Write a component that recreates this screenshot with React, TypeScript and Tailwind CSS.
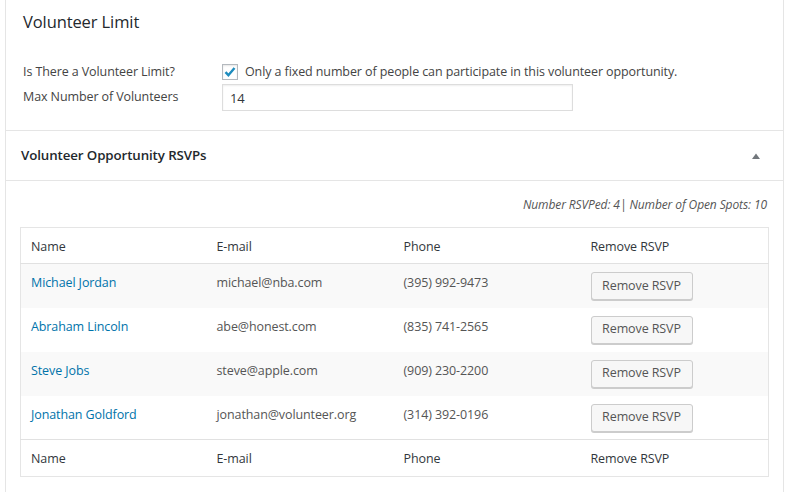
import { useState } from 'react';

const rsvps = [
  { id: 1, name: 'Michael Jordan', email: 'michael@nba.com', phone: '(395) 992-9473' },
  { id: 2, name: 'Abraham Lincoln', email: 'abe@honest.com', phone: '(835) 741-2565' },
  { id: 3, name: 'Steve Jobs', email: 'steve@apple.com', phone: '(909) 230-2200' },
  { id: 4, name: 'Jonathan Goldford', email: 'jonathan@volunteer.org', phone: '(314) 392-0196' },
];

export default function App() {
  const [limited, setLimited] = useState(true);
  const [maxCount, setMaxCount] = useState('14');

  return (
    <div className="min-h-screen bg-white font-['Open_Sans',sans-serif] text-[12.5px] tracking-[-0.1px] text-[#444]">
      <div className="ml-[5px] w-[779px] min-h-[492px] border-x border-[#e5e5e5]">
        <div className="px-[17px] pt-[10px] pb-[19px] border-b border-[#e5e5e5]">
          <h2 className="text-[16.5px] leading-[24px] text-[#23282d] mb-[25px]">Volunteer Limit</h2>
          <div className="flex items-center h-[26px]">
            <div className="w-[199px] text-[#444]">Is There a Volunteer Limit?</div>
            <label className="flex items-center gap-[7px]">
              <button
                type="button"
                onClick={() => setLimited(!limited)}
                className="w-[16px] h-[16px] border border-[#b4b9be] bg-white flex items-center justify-center shadow-[inset_0_1px_2px_rgba(0,0,0,0.1)]"
              >
                {limited && (
                  <svg width="14" height="14" viewBox="0 0 14 14">
                    <path d="M2.5 7.2 L5.4 10.2 L11.5 3" fill="none" stroke="#1e8cbe" strokeWidth="2.4" />
                  </svg>
                )}
              </button>
              <span>Only a fixed number of people can participate in this volunteer opportunity.</span>
            </label>
          </div>
          <div className="flex items-center -mt-[1px]">
            <div className="w-[199px]">Max Number of Volunteers</div>
            <input
              value={maxCount}
              onChange={(event) => setMaxCount(event.target.value)}
              className="w-[351px] h-[27px] border border-[#ddd] px-[7px] text-[13px] text-[#32373c] shadow-[inset_0_1px_2px_rgba(0,0,0,0.07)] outline-none"
            />
          </div>
        </div>

        <div className="h-[50px] px-[15px] flex items-center justify-between border-b border-[#e5e5e5]">
          <h3 className="text-[13.3px] tracking-[-0.1px] font-semibold text-[#23282d]">Volunteer Opportunity RSVPs</h3>
          <svg width="10" height="8" viewBox="0 0 10 8" className="mr-[7px]">
            <path d="M1 7 L5 1.5 L9 7 Z" fill="#72777c" />
          </svg>
        </div>

        <div className="px-[14px] pt-[15px]">
          <p className="text-right text-[12px] italic text-[#555] mb-[13px] pr-[2px]">
            Number RSVPed: 4| Number of Open Spots: 10
          </p>
          <table className="w-[749px] border border-[#e5e5e5] border-collapse text-left">
            <thead>
              <tr className="h-[36px] border-b border-[#e1e1e1]">
                <th className="font-normal text-[#32373c] pl-[10px] pt-[3px] w-[186px]">Name</th>
                <th className="font-normal text-[#32373c] pl-[10px] pt-[3px] w-[187px]">E-mail</th>
                <th className="font-normal text-[#32373c] pl-[10px] pt-[3px] w-[187px]">Phone</th>
                <th className="font-normal text-[#32373c] pl-[10px] pt-[3px]">Remove RSVP</th>
              </tr>
            </thead>
            <tbody>
              {rsvps.map((row, index) => (
                <tr key={row.id} className={index % 2 === 0 ? 'h-[44px] bg-[#f9f9f9]' : 'h-[44px] bg-white'}>
                  <td className="pl-[10px] align-top pt-[10px]">
                    <a href="#" className="text-[#0073aa]">{row.name}</a>
                  </td>
                  <td className="pl-[10px] align-top pt-[10px] text-[#555]">{row.email}</td>
                  <td className="pl-[10px] align-top pt-[10px] text-[#555]">{row.phone}</td>
                  <td className="pl-[10px] align-top pt-[8px]">
                    <button
                      type="button"
                      className="w-[102px] h-[28px] rounded-[3px] border border-[#ccc] bg-[#f7f7f7] text-[#555] text-[12.5px] shadow-[0_1px_0_#ccc]"
                    >
                      Remove RSVP
                    </button>
                  </td>
                </tr>
              ))}
            </tbody>
            <tfoot>
              <tr className="h-[37px] border-t border-[#e1e1e1]">
                <td className="text-[#32373c] pl-[10px] pt-[3px]">Name</td>
                <td className="text-[#32373c] pl-[10px] pt-[3px]">E-mail</td>
                <td className="text-[#32373c] pl-[10px] pt-[3px]">Phone</td>
                <td className="text-[#32373c] pl-[10px] pt-[3px]">Remove RSVP</td>
              </tr>
            </tfoot>
          </table>
        </div>
      </div>
    </div>
  );
}
